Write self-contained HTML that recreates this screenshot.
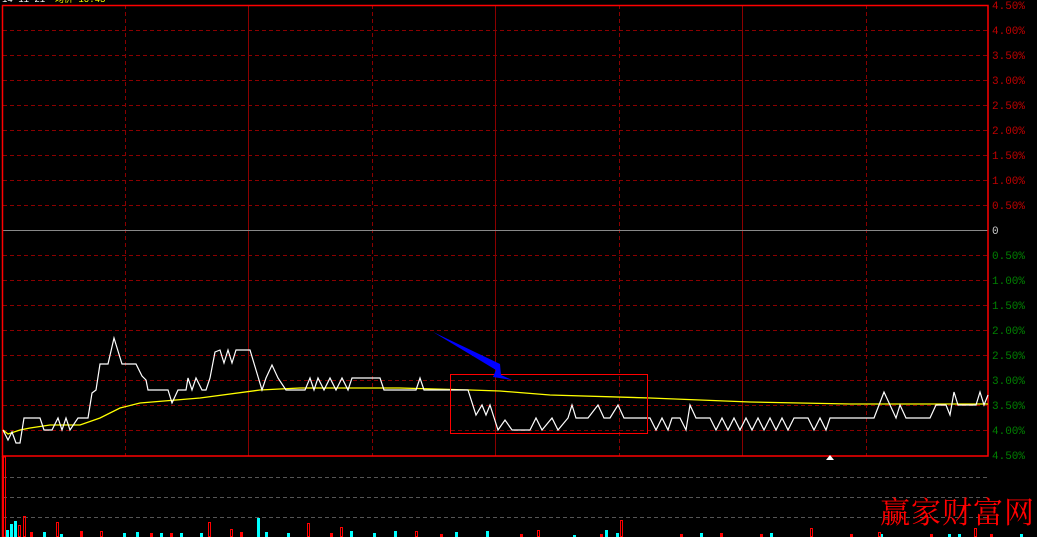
<!DOCTYPE html>
<html><head><meta charset="utf-8"><style>
html,body{margin:0;padding:0;background:#000;}
body{width:1037px;height:537px;overflow:hidden;}
svg{display:block}
</style></head><body>
<svg width="1037" height="537" viewBox="0 0 1037 537" xmlns="http://www.w3.org/2000/svg" font-family="Liberation Mono, monospace">
<rect width="1037" height="537" fill="#000"/>
<g stroke="#8b0000" stroke-width="1" stroke-dasharray="4,3">
<line x1="3" y1="30.5" x2="988" y2="30.5"/><line x1="3" y1="55.5" x2="988" y2="55.5"/>
<line x1="3" y1="80.5" x2="988" y2="80.5"/><line x1="3" y1="105.5" x2="988" y2="105.5"/>
<line x1="3" y1="130.5" x2="988" y2="130.5"/><line x1="3" y1="155.5" x2="988" y2="155.5"/>
<line x1="3" y1="180.5" x2="988" y2="180.5"/><line x1="3" y1="205.5" x2="988" y2="205.5"/>
<line x1="3" y1="255.5" x2="988" y2="255.5"/><line x1="3" y1="280.5" x2="988" y2="280.5"/>
<line x1="3" y1="305.5" x2="988" y2="305.5"/><line x1="3" y1="330.5" x2="988" y2="330.5"/>
<line x1="3" y1="355.5" x2="988" y2="355.5"/><line x1="3" y1="380.5" x2="988" y2="380.5"/>
<line x1="3" y1="405.5" x2="988" y2="405.5"/><line x1="3" y1="430.5" x2="988" y2="430.5"/>
<line x1="125.5" y1="5" x2="125.5" y2="456"/><line x1="372.5" y1="5" x2="372.5" y2="456"/>
<line x1="619.5" y1="5" x2="619.5" y2="456"/><line x1="866.5" y1="5" x2="866.5" y2="456"/>
</g>
<g stroke="#8b0000" stroke-width="1">
<line x1="248.5" y1="5" x2="248.5" y2="456"/><line x1="495.5" y1="5" x2="495.5" y2="456"/>
<line x1="742.5" y1="5" x2="742.5" y2="456"/>
<line x1="3" y1="230.5" x2="988" y2="230.5" stroke="#888"/>
</g>
<g stroke="#555" stroke-dasharray="4,3">
<line x1="3" y1="477.5" x2="988" y2="477.5"/><line x1="3" y1="497.5" x2="988" y2="497.5"/><line x1="3" y1="517.5" x2="988" y2="517.5"/>
</g>
<rect x="2.5" y="5.5" width="985.5" height="450.5" fill="none" stroke="#f00" stroke-width="1.5"/>
<line x1="2.5" y1="456" x2="2.5" y2="537" stroke="#f00" stroke-width="1.5"/>
<rect x="3.5" y="457" width="2" height="80" fill="none" stroke="#f00" stroke-width="1"/>
<g font-size="11" fill="#c00000">
<text x="992" y="9">4.50%</text><text x="992" y="34">4.00%</text><text x="992" y="59">3.50%</text>
<text x="992" y="84">3.00%</text><text x="992" y="109">2.50%</text><text x="992" y="134">2.00%</text>
<text x="992" y="159">1.50%</text><text x="992" y="184">1.00%</text><text x="992" y="209">0.50%</text>
</g>
<text x="992" y="234" font-size="11" fill="#ccc">0</text>
<g font-size="11" fill="#008000">
<text x="992" y="259">0.50%</text><text x="992" y="284">1.00%</text><text x="992" y="309">1.50%</text>
<text x="992" y="334">2.00%</text><text x="992" y="359">2.50%</text><text x="992" y="384">3.00%</text>
<text x="992" y="409">3.50%</text><text x="992" y="434">4.00%</text><text x="992" y="459">4.50%</text>
</g>
<text x="2" y="2" font-size="9" fill="#fff">14 11 21</text><text x="55" y="2" font-size="9" fill="#ff0">均价 10.43</text>
<polyline fill="none" stroke="#ff0" stroke-width="1.3" points="3,430 8,434 20,430 30,428 50,425 80,425 100,418 120,408 140,403 200,398 260,390 300,388 400,388 470,390 500,391 550,395 650,398 750,402 850,404 988,404"/>
<polyline fill="none" stroke="#fff" stroke-width="1.2" points="3,430 8,440 12,432 16,443 20,443 24,418 40,418 44,430 52,430 58,418 62,430 66,418 70,430 78,418 88,418 92,393 96,390 100,364 108,364 114,338 122,364 136,364 142,376 146,380 148,390 168,390 172,403 178,390 186,390 188,378 192,390 196,378 202,390 206,390 210,378 215,352 220,350 224,363 228,350 232,363 236,350 250,350 256,370 262,390 266,378 272,365 278,378 286,390 305,390 310,378 314,390 318,378 324,390 330,378 336,390 342,378 348,390 352,378 380,378 384,390 416,390 420,378 424,390 468,390 476,415 482,405 486,415 490,405 498,430 505,420 512,430 530,430 536,418 542,430 552,418 558,430 568,418 572,405 576,418 582,418 588,418 598,405 604,418 610,418 618,405 624,418 650,418 656,430 662,418 668,430 672,418 680,418 686,430 690,405 696,418 710,418 716,430 722,418 728,430 734,418 740,430 746,418 752,430 758,418 764,430 770,418 776,430 782,418 788,430 794,418 808,418 814,430 820,418 826,430 830,418 874,418 884,392 890,405 896,418 900,405 906,418 930,418 936,405 946,405 950,415 954,392 958,405 976,405 980,392 984,405 988,395"/>
<rect x="450.5" y="374.5" width="197" height="59" fill="none" stroke="#f00" stroke-width="1"/>
<polygon points="433,332 500,364 501,375 512,380 493,377 496,370" fill="#00f"/>
<polygon points="826,460 830,455 834,460" fill="#fff"/>
<g fill="#0ff">
<rect x="6" y="530" width="3" height="7"/><rect x="10" y="524" width="3" height="13"/><rect x="14" y="521" width="3" height="16"/>
<rect x="43" y="532" width="3" height="5"/><rect x="60" y="534" width="3" height="3"/><rect x="123" y="533" width="3" height="4"/>
<rect x="136" y="532" width="3" height="5"/><rect x="160" y="533" width="3" height="4"/><rect x="180" y="533" width="3" height="4"/>
<rect x="257" y="518" width="3" height="19"/><rect x="265" y="532" width="3" height="5"/><rect x="200" y="533" width="3" height="4"/>
<rect x="287" y="533" width="3" height="4"/><rect x="350" y="531" width="3" height="6"/><rect x="373" y="533" width="3" height="4"/>
<rect x="394" y="531" width="3" height="6"/><rect x="455" y="532" width="3" height="5"/><rect x="486" y="531" width="3" height="6"/>
<rect x="573" y="535" width="3" height="2"/><rect x="616" y="533" width="3" height="4"/><rect x="605" y="530" width="3" height="7"/>
<rect x="700" y="533" width="3" height="4"/><rect x="770" y="533" width="3" height="4"/><rect x="880" y="534" width="3" height="3"/>
<rect x="948" y="534" width="3" height="3"/><rect x="1020" y="534" width="3" height="3"/><rect x="958" y="534" width="3" height="3"/>
</g>
<g fill="none" stroke="#f00" stroke-width="1">
<rect x="18.5" y="525.5" width="2" height="11"/><rect x="23.5" y="516.5" width="2" height="20"/><rect x="56.5" y="522.5" width="2" height="14"/>
<rect x="208.5" y="522.5" width="2" height="14"/><rect x="307.5" y="523.5" width="2" height="13"/><rect x="340.5" y="527.5" width="2" height="9"/>
<rect x="620.5" y="520.5" width="2" height="16"/><rect x="415.5" y="531.5" width="2" height="5"/><rect x="537.5" y="530.5" width="2" height="6"/>
<rect x="810.5" y="528.5" width="2" height="8"/><rect x="974.5" y="528.5" width="2" height="8"/><rect x="878.5" y="532.5" width="2" height="4"/>
<rect x="100.5" y="531.5" width="2" height="5"/><rect x="230.5" y="529.5" width="2" height="7"/>
</g>
<g fill="#f00">
<rect x="30" y="532" width="3" height="5"/><rect x="80" y="531" width="3" height="6"/><rect x="150" y="533" width="3" height="4"/>
<rect x="240" y="532" width="3" height="5"/><rect x="330" y="533" width="3" height="4"/><rect x="440" y="534" width="3" height="3"/>
<rect x="520" y="534" width="3" height="3"/><rect x="600" y="534" width="3" height="3"/><rect x="680" y="534" width="3" height="3"/>
<rect x="720" y="533" width="3" height="4"/><rect x="760" y="534" width="3" height="3"/><rect x="850" y="534" width="3" height="3"/>
<rect x="930" y="534" width="3" height="3"/><rect x="990" y="534" width="3" height="3"/><rect x="170" y="533" width="3" height="4"/>
</g>
<text x="880" y="523" font-size="30" fill="#f00" font-family="Noto Serif CJK SC, serif" letter-spacing="1">赢家财富网</text>
</svg>
</body></html>
